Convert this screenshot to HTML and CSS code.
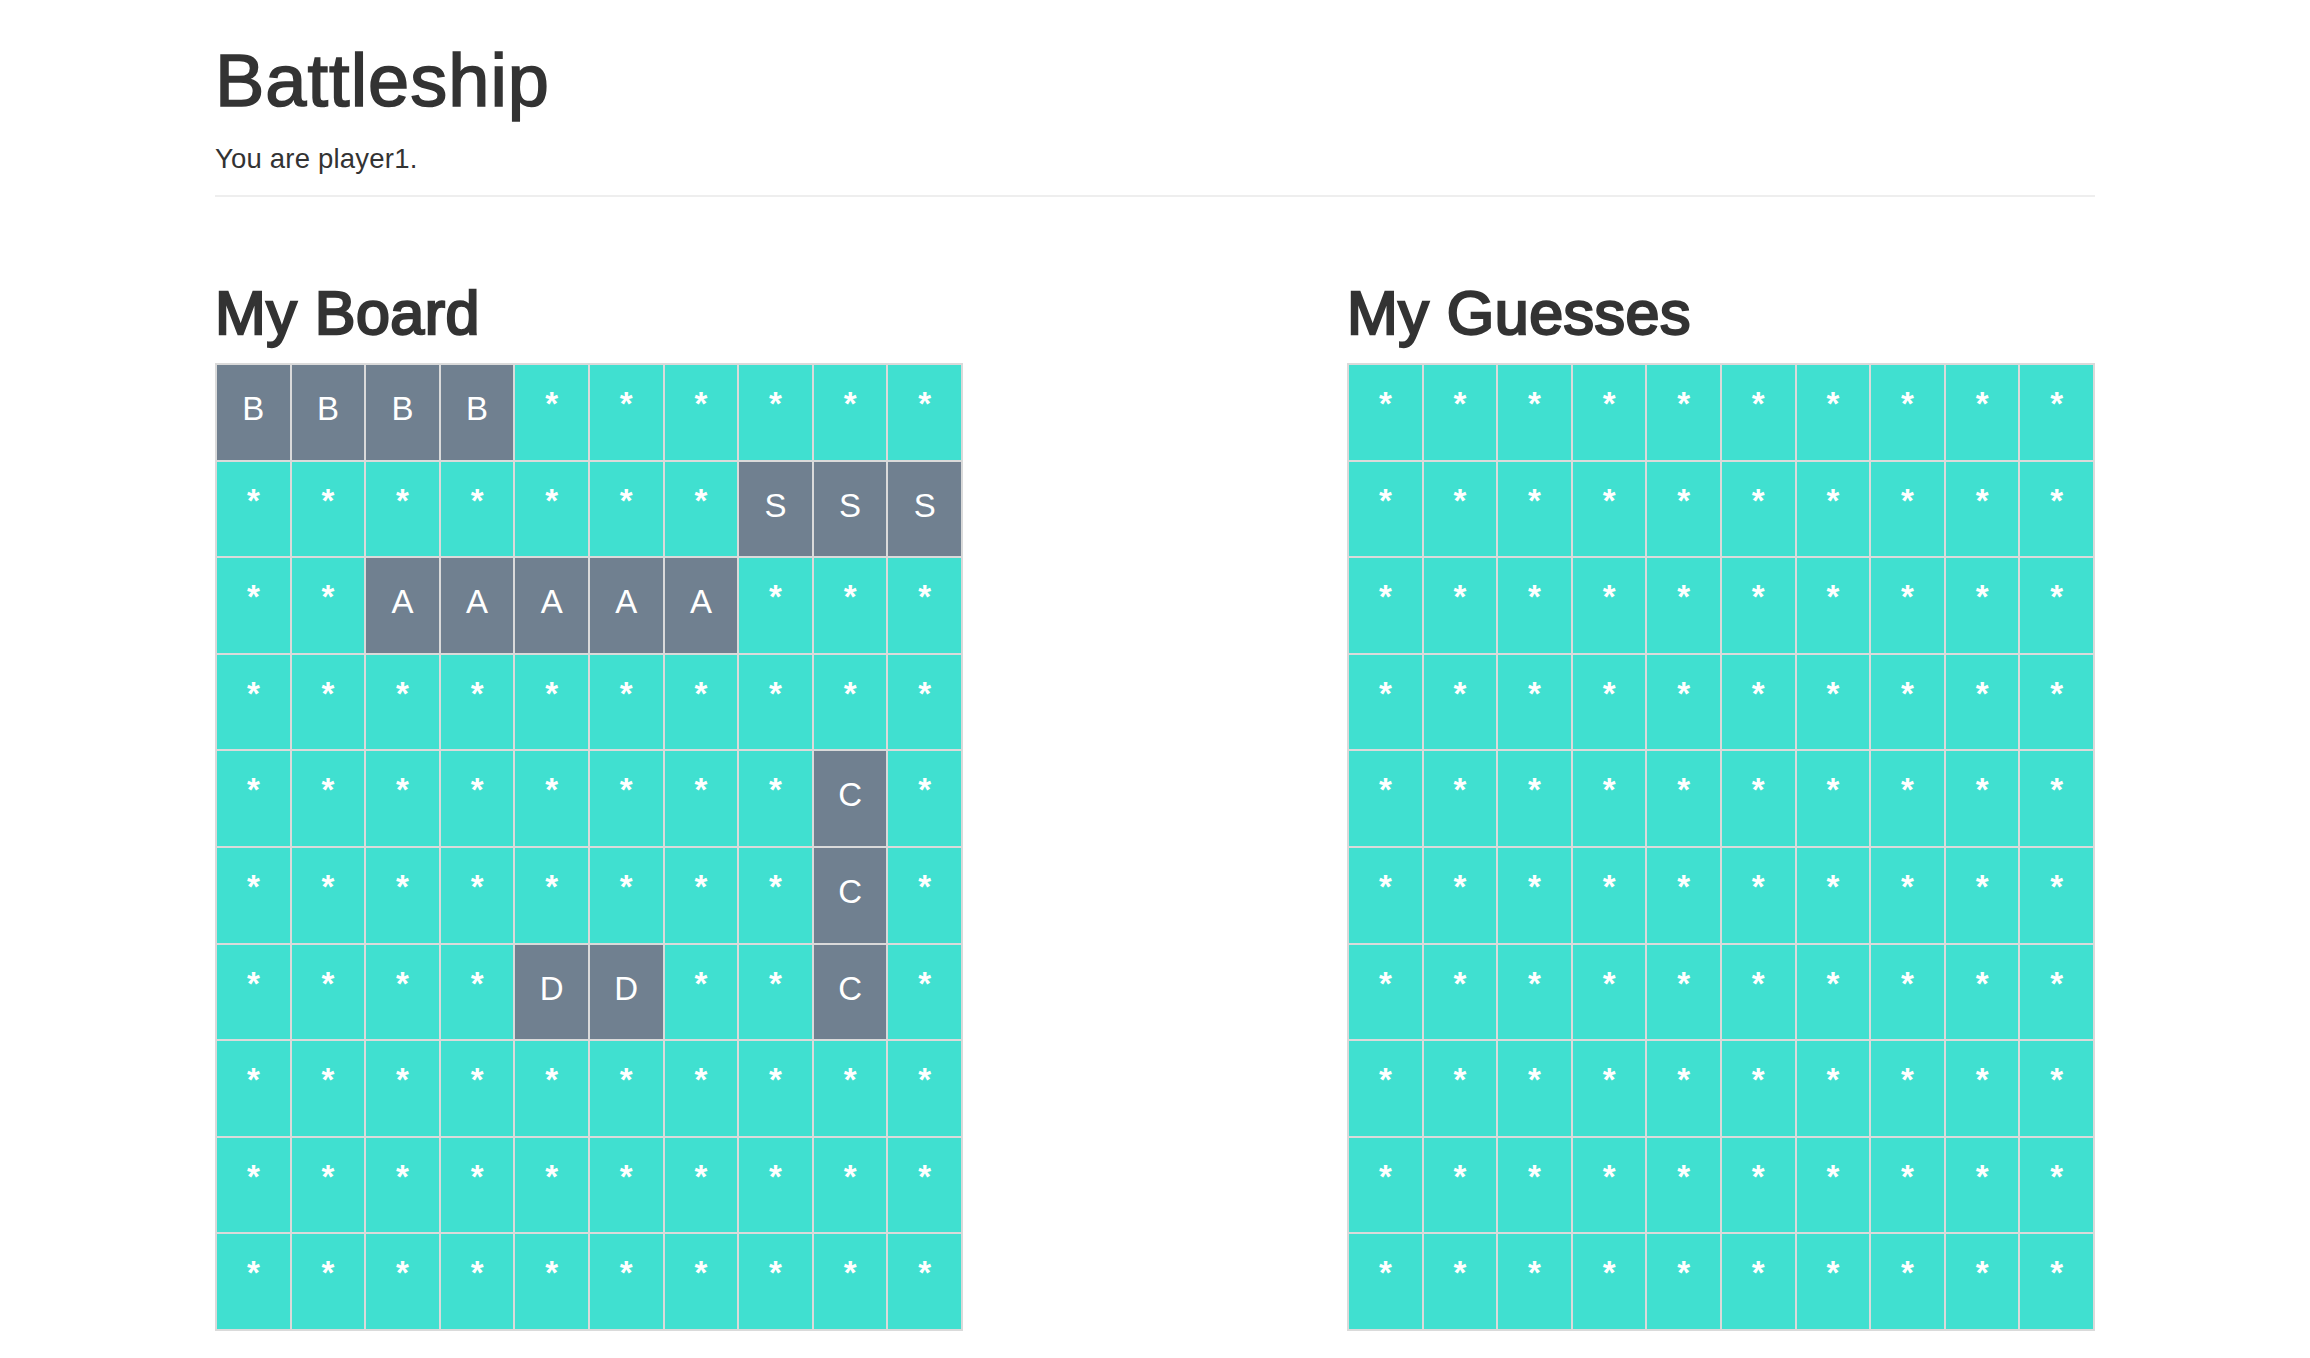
FILE: index.html
```html
<!DOCTYPE html>
<html lang="en">
<head>
<meta charset="utf-8">
<title>Battleship</title>
<link rel="stylesheet" href="styles.css">
</head>
<body>
<div class="container">
  <header class="page-header">
    <h1 class="title">Battleship</h1>
    <p class="subtitle">You are player1.</p>
  </header>
  <div class="boards">
    <section class="board-col">
      <h2 class="board-title">My Board</h2>
      <div class="board" id="my-board"></div>
    </section>
    <section class="board-col">
      <h2 class="board-title">My Guesses</h2>
      <div class="board" id="guesses"></div>
    </section>
  </div>
</div>
<script src="app.js"></script>
</body>
</html>
```
FILE: styles.css
```css
html, body {
  margin: 0;
  padding: 0;
  background: #fff;
}
body {
  font-family: "Liberation Sans", Arial, Helvetica, sans-serif;
  color: #333;
}
.container {
  width: 1880px;
  margin: 0 auto;
}
.page-header {
  padding-top: 40px;
  border-bottom: 2px solid #eee;
}
.title {
  margin: 0;
  font-size: 74px;
  line-height: 81px;
  font-weight: 400;
  -webkit-text-stroke: 1.6px #333;
  letter-spacing: 1px;
}
.subtitle {
  margin: 19px 0 17px;
  font-size: 27.5px;
  line-height: 38px;
  letter-spacing: 0.2px;
}
.boards {
  display: flex;
  justify-content: space-between;
  padding-top: 83px;
}
.board-col {
  width: 748px;
}
.board-title {
  margin: 0 0 16px;
  font-size: 61px;
  line-height: 67px;
  font-weight: 400;
  letter-spacing: 0.5px;
  -webkit-text-stroke: 2.4px #333;
}
.board {
  display: grid;
  grid-template-columns: repeat(10, 1fr);
  grid-auto-rows: 94.6px;
  gap: 2px;
  padding: 2px;
  background: #dadada;
}
.cell {
  background: #40e0d0;
  color: #fff;
  text-align: center;
  font-size: 33px;
  line-height: 47px;
  padding-top: 20px;
  box-sizing: border-box;
}
.cell.water {
  font-weight: 700;
  padding-top: 15px;
}
.cell.ship {
  background: #708090;
}
```
FILE: app.js
```js
(function () {
  var myBoard = [
    "BBBB******",
    "*******SSS",
    "**AAAAA***",
    "**********",
    "********C*",
    "********C*",
    "****DD**C*",
    "**********",
    "**********",
    "**********"
  ];
  function render(el, rows) {
    var frag = document.createDocumentFragment();
    rows.forEach(function (row) {
      row.split("").forEach(function (ch) {
        var d = document.createElement("div");
        d.className = "cell " + (ch === "*" ? "water" : "ship");
        d.textContent = ch;
        frag.appendChild(d);
      });
    });
    el.appendChild(frag);
  }
  render(document.getElementById("my-board"), myBoard);
  var empty = [];
  for (var i = 0; i < 10; i++) empty.push("**********");
  render(document.getElementById("guesses"), empty);
})();
```
